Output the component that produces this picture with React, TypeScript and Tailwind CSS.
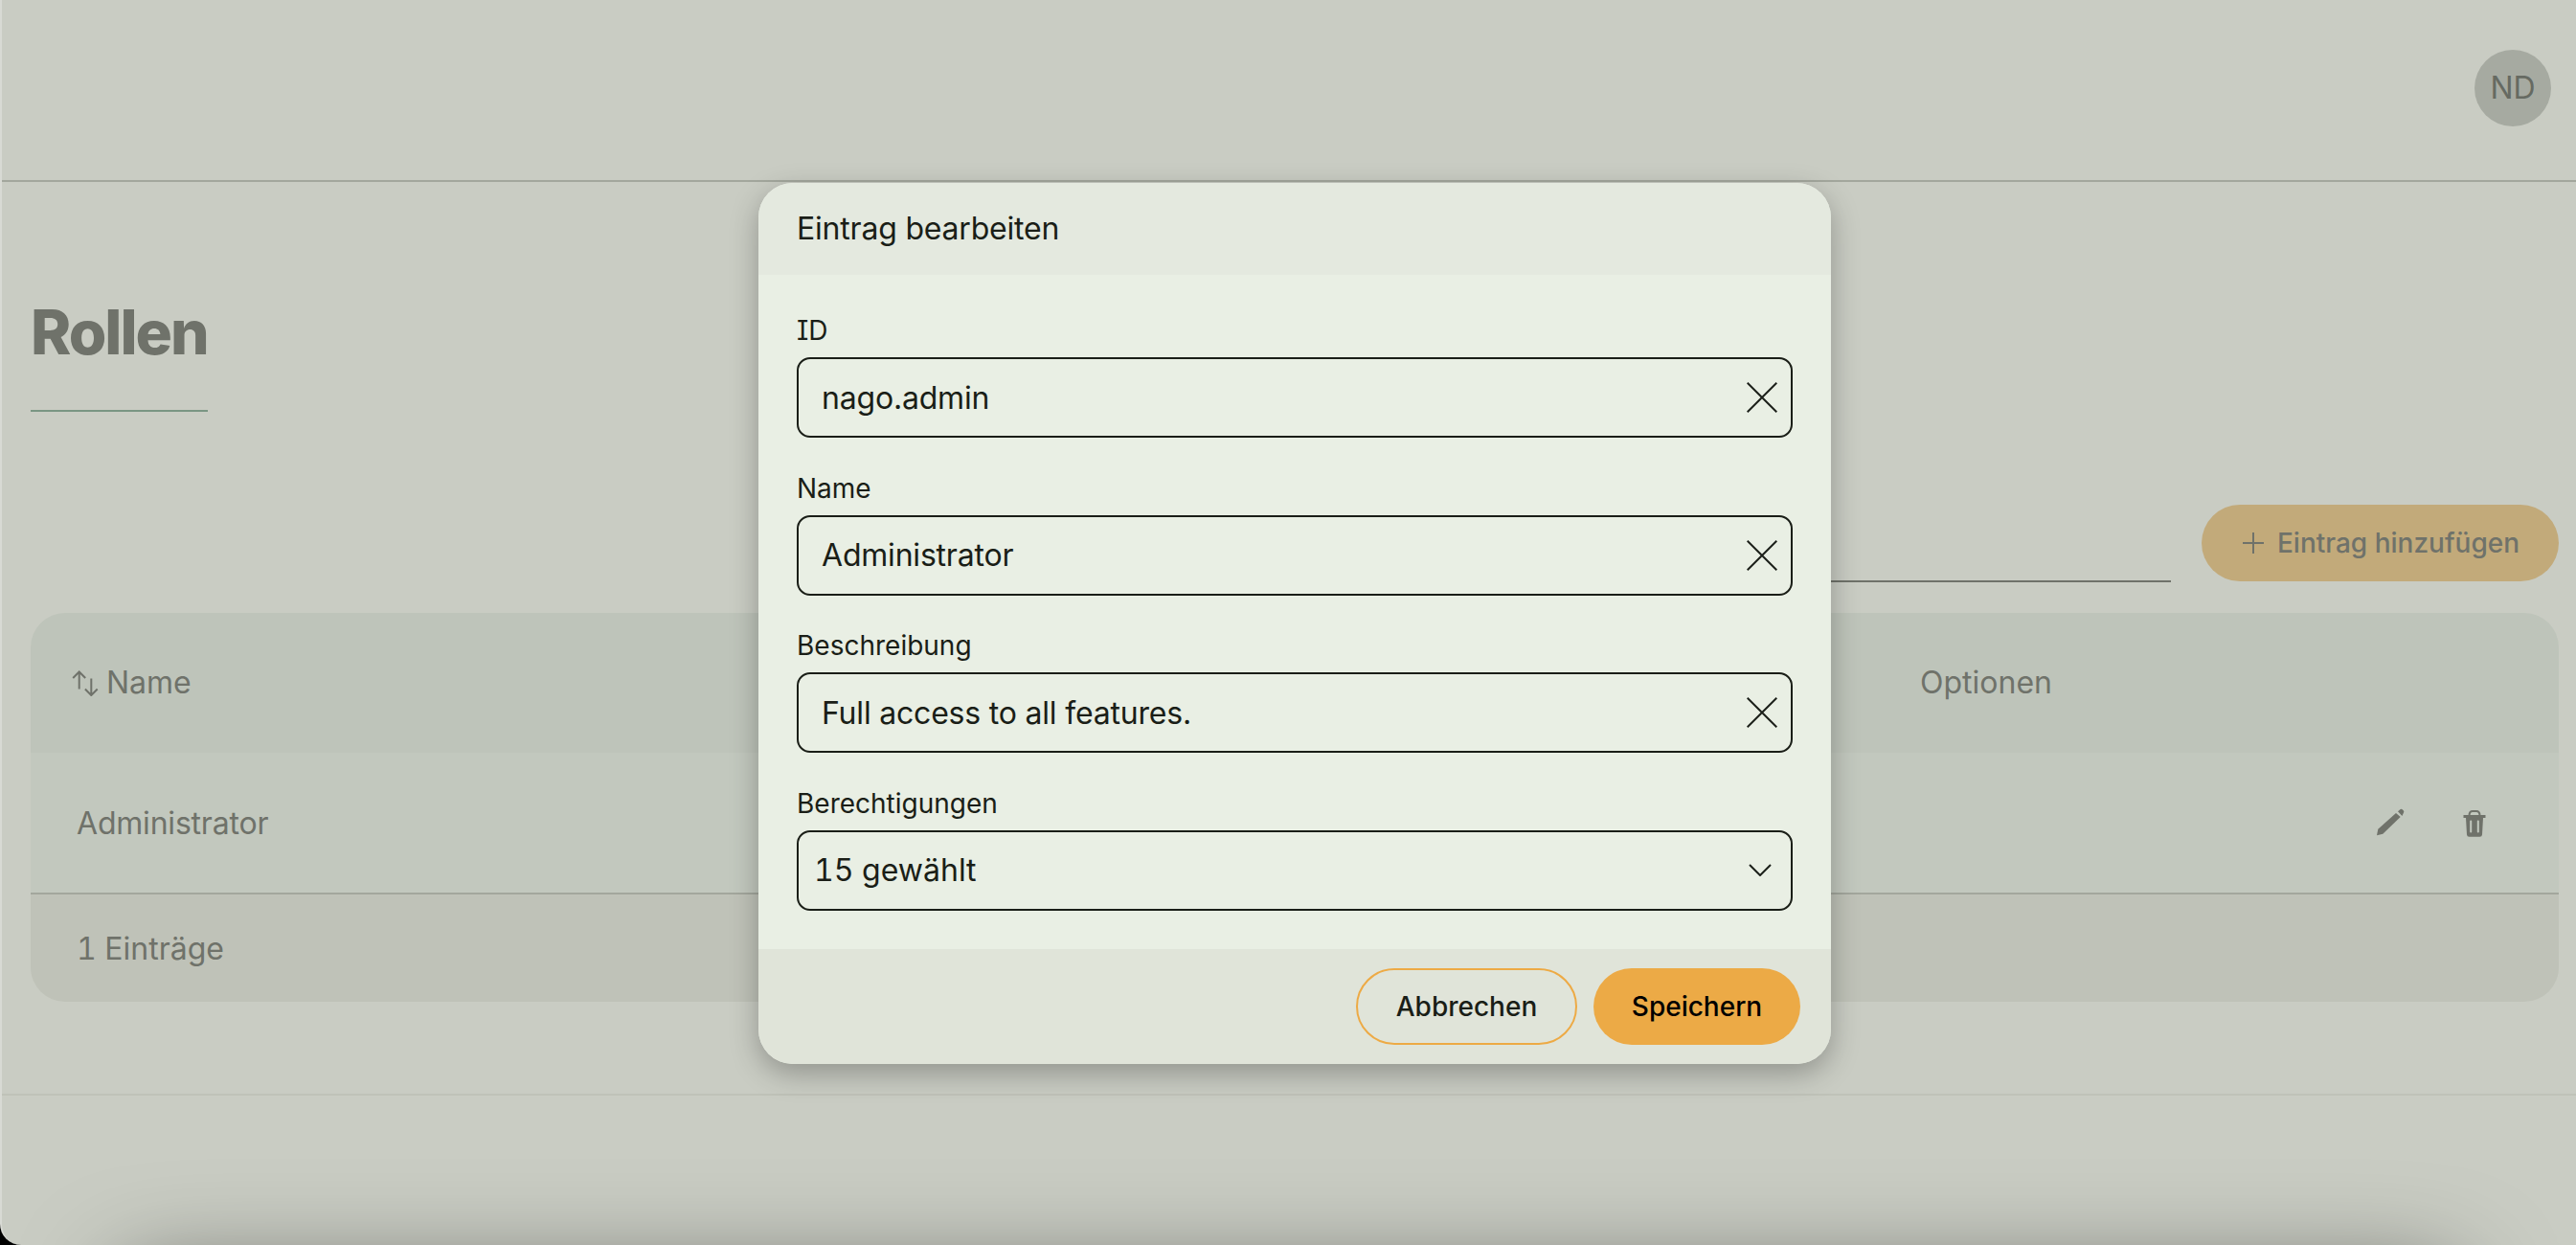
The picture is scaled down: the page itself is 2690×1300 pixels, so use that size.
const muted = 'text-[#6f726a]';

function CloseIcon() {
  return (
    <svg width="32" height="32" viewBox="0 0 32 32" fill="none" stroke="#1c201a" strokeWidth="2" className="shrink-0">
      <path d="M0.7 0.7 31.3 31.3M31.3 0.7 0.7 31.3" />
    </svg>
  );
}

function Field({ label, value, first }: { label: string; value: string; first?: boolean }) {
  return (
    <div className="flex flex-col gap-2">
      <label className={`text-[28px] leading-[40px] ${first ? '[font-feature-settings:"cv08","ss02"]' : ''}`}>{label}</label>
      <div className="h-[84px] rounded-[14px] border-2 border-[#1a1e17] flex items-center justify-between pl-[24px] pr-[14px] text-[32px] tracking-[-0.2px]">
        <span className="pt-px">{value}</span>
        <CloseIcon />
      </div>
    </div>
  );
}

function SortIcon() {
  return (
    <svg width="28" height="28" viewBox="0 0 28 28" fill="none" stroke="#6f726a" strokeWidth="2" className="shrink-0">
      <path d="M7.7 20.5V2.5M1.2 9 7.7 2.5 14.2 9" />
      <path d="M20.3 9.5V27M13.9 20.5 20.3 27 26.7 20.5" />
    </svg>
  );
}

function PencilIcon() {
  return (
    <svg width="32" height="32" viewBox="0 0 32 32" fill="#6f726a" className="shrink-0">
      <path d="M3.3 21.7 22 5l4.7 4L8.3 26.7 2 28.3Z" strokeLinejoin="round" />
      <path d="M24 3.3 26.7 0.9a1.6 1.6 0 0 1 1.6 0l1.5 1.4a2 2 0 0 1 0 2.6L28.4 8.1Z" />
    </svg>
  );
}

function TrashIcon() {
  return (
    <svg width="24" height="28" viewBox="0 0 24 28" className="shrink-0">
      <path d="M6.5 5.5C6.5 2.2 8 1 10 1h4c2 0 3.5 1.2 3.5 4.5" fill="none" stroke="#6f726a" strokeWidth="2" />
      <path d="M0.5 5h23v3h-23Z" fill="#6f726a" />
      <path d="M3 8h18l-1 17.5a2.5 2.5 0 0 1-2.5 2.3h-11A2.5 2.5 0 0 1 4 25.5Z" fill="#6f726a" />
      <path d="M8.2 11.5v11M15.8 11.5v11" stroke="#c2c8be" strokeWidth="2" strokeLinecap="round" />
    </svg>
  );
}

function Page() {
  return (
    <div className={`w-full h-full flex flex-col ${muted}`}>
      {/* Top bar */}
      <header className="h-[190px] shrink-0 border-b-2 border-[#a3a79d] flex justify-end pt-[52px] pr-[26px]">
        <div className="w-[80px] h-[80px] rounded-full bg-[#a6aaa1] flex items-center justify-center text-[32px] text-[#666a62]">ND</div>
      </header>

      <main className="pl-[30px] pr-[18px] flex flex-col">
        <h1 className="mt-[117px] text-[64px] leading-[80px] font-extrabold tracking-[-2px]">Rollen</h1>
        <div className="mt-[41px] w-[185px] h-[2px] bg-[#7a9683]" />

        {/* Toolbar */}
        <div className="mt-[97px] flex justify-end items-start gap-[32px]">
          <div className="w-[1400px] h-[81px] border-b-2 border-[#6f726a]" />
          <button className="h-[80px] w-[373px] pl-[2px] rounded-full bg-[#c2aa7a] flex items-center justify-center gap-[14px] text-[28px] font-medium">
            <svg width="22" height="22" viewBox="0 0 22 22" fill="none" stroke="#6f726a" strokeWidth="2">
              <path d="M11 0v22M0 11h22" />
            </svg>
            Eintrag hinzufügen
          </button>
        </div>

        {/* Table */}
        <div className="mt-[32px] rounded-[36px] overflow-hidden text-[32px]">
          <div className="h-[146px] bg-[#bec4ba] flex items-center">
            <div className="w-[1973px] pl-[43px] flex items-center gap-[8px]">
              <SortIcon />
              <span>Name</span>
            </div>
            <span>Optionen</span>
          </div>
          <div className="h-[148px] pt-[2px] bg-[#c2c8be] border-b-2 border-[#a3a79d] flex items-center justify-between pl-[48px] pr-[76px] tracking-[-0.2px]">
            <span>Administrator</span>
            <div className="flex items-center gap-[60px]">
              <PencilIcon />
              <TrashIcon />
            </div>
          </div>
          <div className="h-[112px] pt-[2px] bg-[#bfc2b8] flex items-center pl-[48px] tabular-nums">1 Einträge</div>
        </div>
      </main>

      <div className="mt-[96px] h-[2px] bg-[#bfc2b8]" />
    </div>
  );
}

function Dialog() {
  return (
    <div className="w-[1120px] h-[920px] rounded-[36px] overflow-hidden flex flex-col bg-[#e9efe4] text-[#1a1e17] shadow-[0_10px_30px_rgba(0,0,0,0.28)]">
      <div className="h-[96px] shrink-0 bg-[#e4e9df] flex items-center px-[40px] text-[32px] tracking-[-0.2px]">Eintrag bearbeiten</div>
      <div className="flex-1 px-[40px] pt-[38px] flex flex-col gap-[32.5px]">
        <Field label="ID" value="nago.admin" first />
        <Field label="Name" value="Administrator" />
        <Field label="Beschreibung" value="Full access to all features." />
        <div className="flex flex-col gap-2">
          <label className="text-[28px] leading-[40px]">Berechtigungen</label>
          <div className="h-[84px] rounded-[14px] border-2 border-[#1a1e17] flex items-center justify-between pl-[16px] pr-[20px] text-[32px] tabular-nums">
            <span className="pt-px">15 gewählt</span>
            <svg width="24" height="13" viewBox="0 0 24 13" fill="none" stroke="#1c201a" strokeWidth="2">
              <path d="M1 1 12 12 23 1" />
            </svg>
          </div>
        </div>
      </div>
      <div className="h-[120px] shrink-0 bg-[#e0e4d9] flex items-center justify-end gap-[17px] pr-[32px] text-[28px] font-medium">
        <button className="h-[80px] w-[231px] rounded-full border-2 border-[#edaa45]">Abbrechen</button>
        <button className="h-[80px] w-[216px] rounded-full bg-[#ecaa46] text-black">Speichern</button>
      </div>
    </div>
  );
}

export default function App() {
  return (
    <div className="w-[2690px] h-[1300px] bg-black font-['Inter',sans-serif]">
      <div className="relative w-full h-full overflow-hidden rounded-bl-[22px] bg-[#c9ccc3] border-l-2 border-[#d8dad4]">
        <Page />
        {/* shadow of the window below the fold */}
        <div className="absolute left-[120px] right-[120px] top-[1340px] h-[100px] rounded-[40px] shadow-[0_-10px_100px_rgba(0,0,0,0.5)]" />
        <div className="absolute inset-0 flex items-center justify-center pl-[12px] pt-[2px]">
          <Dialog />
        </div>
      </div>
    </div>
  );
}
